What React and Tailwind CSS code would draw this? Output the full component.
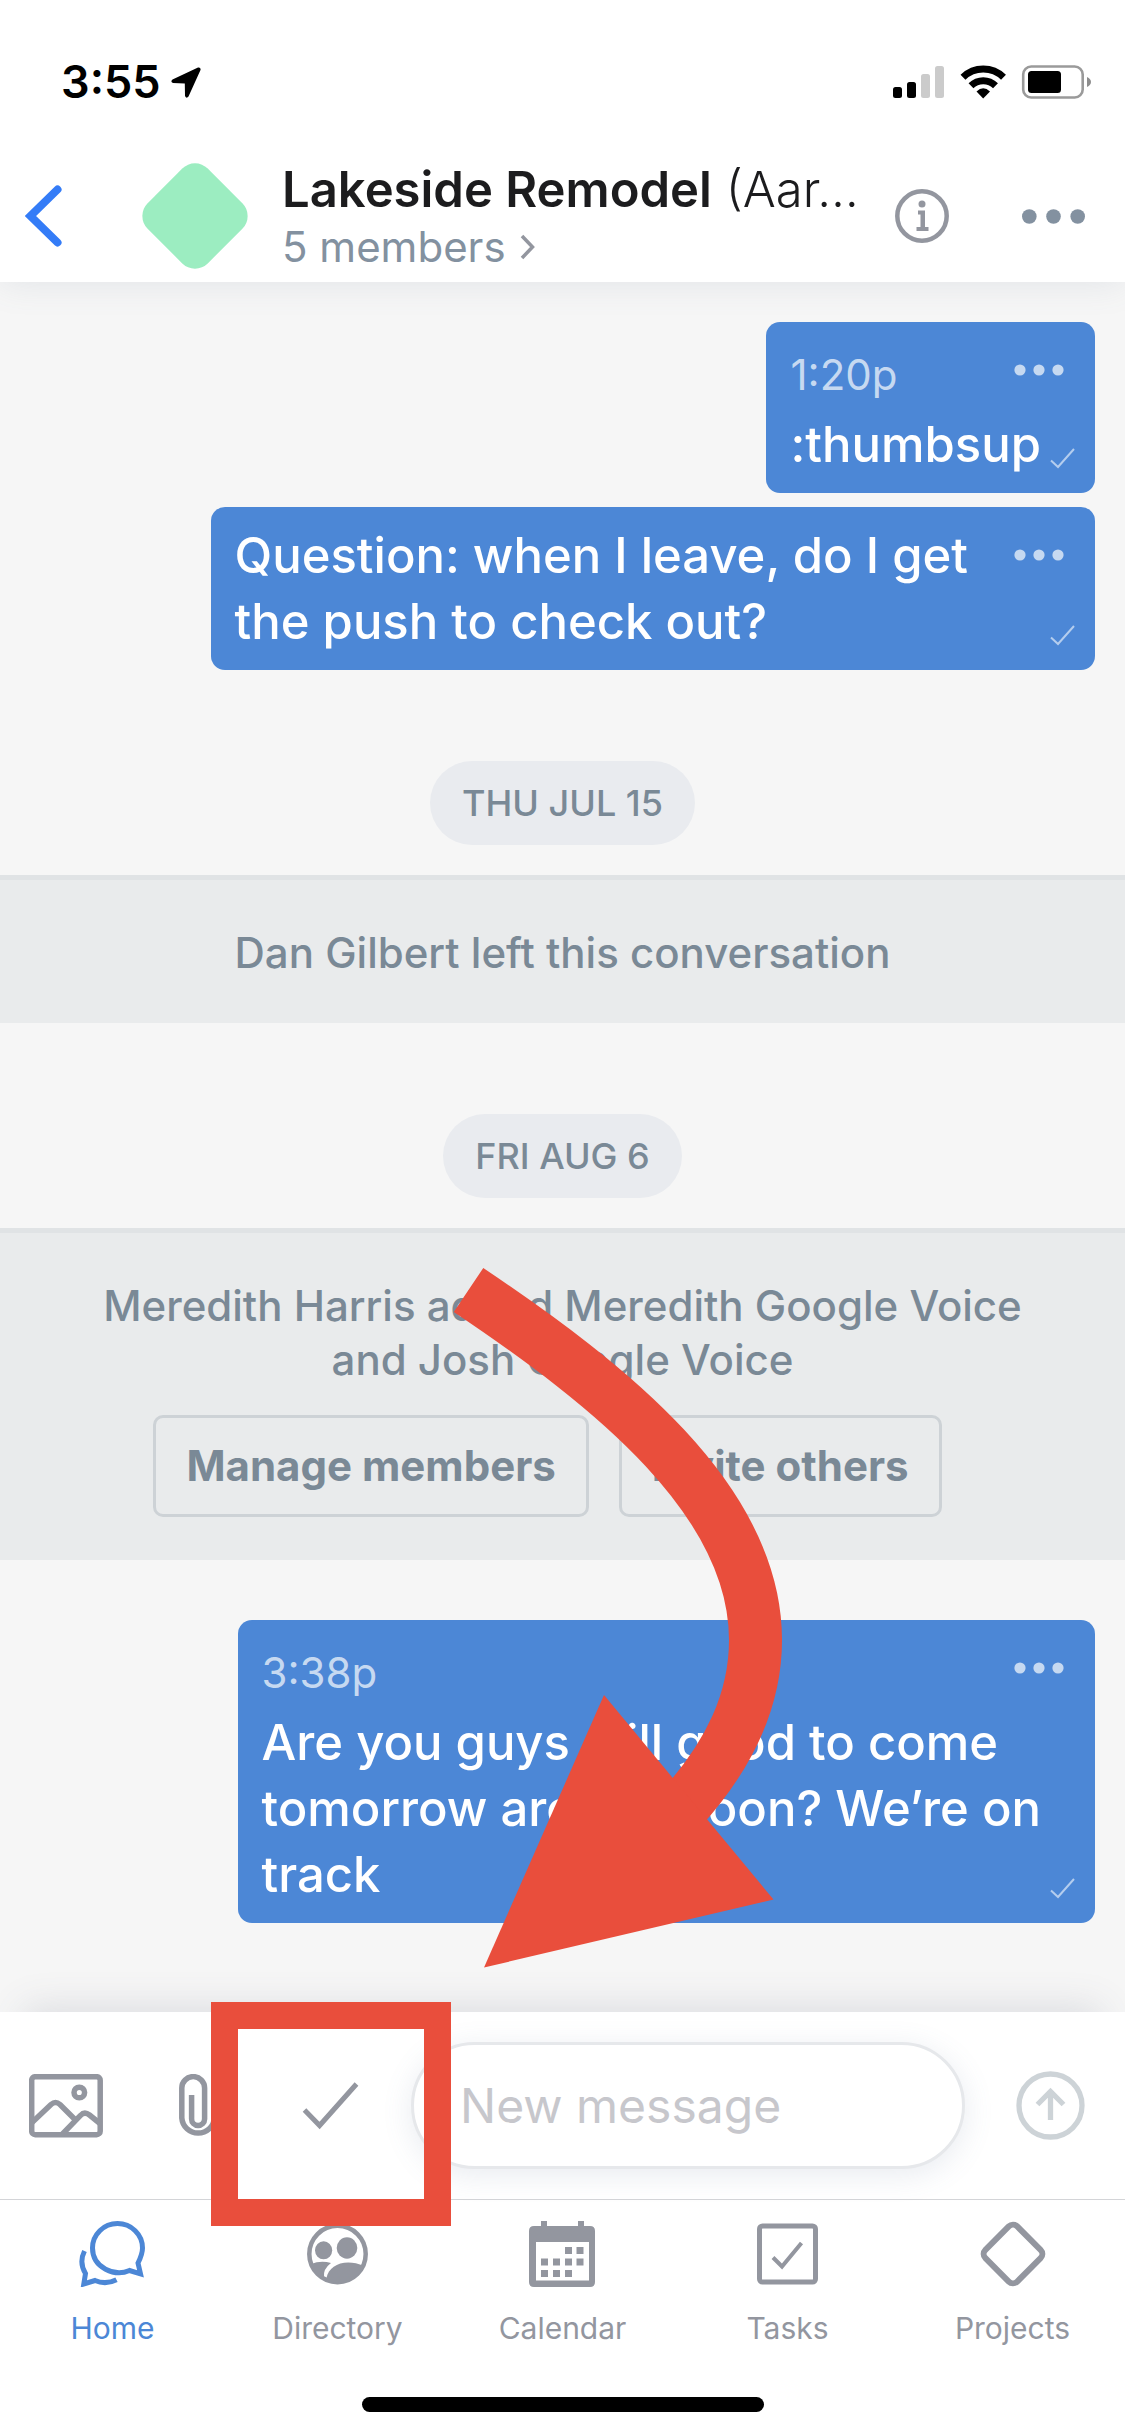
import React, { useState } from "react";

const tabs = [
  { name: "Home", icon: HomeIcon },
  { name: "Directory", icon: DirectoryIcon },
  { name: "Calendar", icon: CalendarIcon },
  { name: "Tasks", icon: TasksIcon },
  { name: "Projects", icon: ProjectsIcon },
];

function HomeIcon() {
  return (
    <svg width="67" height="66" viewBox="0 0 67 66" fill="none" stroke="currentColor" strokeWidth="5">
      <path d="M59 42 L61.5 52.8 L50.5 49.5 C36 56 13.5 47 13.5 27 A25 24.5 0 0 1 63.5 27 C63.5 33 61 38 59 42 Z" />
      <path d="M5.5 30 C1 39 2.5 46 6.5 52.5 L4.8 63 L16 59.5 C23 62.5 31 62 37.5 58.7" />
    </svg>
  );
}

function DirectoryIcon() {
  return (
    <svg width="62" height="66" viewBox="0 -3 62 66" fill="currentColor">
      <circle cx="30.5" cy="30" r="28.2" fill="none" stroke="currentColor" strokeWidth="4.5" />
      <ellipse cx="16.6" cy="26.3" rx="8.6" ry="9" />
      <ellipse cx="40" cy="24" rx="10.3" ry="10.7" />
      <path d="M4 40 Q14 36 24 39 Q16 45 17 53 L14 53 Q6 48 4 40 Z" />
      <path d="M19.5 54 C22 41 38 34 57 42 C52 56 36 63 19.5 56 Z" />
    </svg>
  );
}

function CalendarIcon() {
  return (
    <svg width="67" height="66" viewBox="0 0 67 66" fill="currentColor">
      <path d="M12 0h6v8h-6z M49 0h6v8h-6z" />
      <path fillRule="evenodd" d="M5 5H61Q66 5 66 10V61Q66 66 61 66H5Q0 66 0 61V10Q0 5 5 5Z M7 21V59.5H60V21Z" />
      <path d="M36 26h7v7h-7z M47.5 26h7v7h-7z M12 37.5h7v7h-7z M24 37.5h7v7h-7z M36 37.5h7v7h-7z M47.5 37.5h7v7h-7z M12 49h7v7h-7z M24 49h7v7h-7z M36 49h7v7h-7z" />
    </svg>
  );
}

function TasksIcon() {
  return (
    <svg width="61" height="66" viewBox="0 -2.5 61 66" fill="none" stroke="currentColor">
      <rect x="2.5" y="2.5" width="56" height="56" rx="3" strokeWidth="5" />
      <path d="M16 34 L25 43 L44.5 19.5" strokeWidth="4" />
    </svg>
  );
}

function ProjectsIcon() {
  return (
    <svg width="66" height="66" viewBox="-33 -33 66 66" fill="none" stroke="currentColor" strokeWidth="6">
      <rect x="-22.5" y="-22.5" width="45" height="45" rx="6" transform="rotate(45)" />
    </svg>
  );
}

function Dots() {
  return (
    <svg width="50" height="12" viewBox="0 0 50 12" fill="currentColor">
      <circle cx="6" cy="6" r="5.6" />
      <circle cx="25" cy="6" r="5.6" />
      <circle cx="44" cy="6" r="5.6" />
    </svg>
  );
}

function StatusBar() {
  return (
    <div className="flex items-center justify-between pt-[54px] pl-[61px] pr-[34px] h-[110px]">
      <div className="flex items-center gap-[10px] text-[45px] leading-[56px] font-semibold text-black">
        3:55
        <svg width="30" height="31" viewBox="0 0 30 31" fill="currentColor">
          <path d="M27 0.5 Q30 0 29.5 3 L17.5 29.5 Q15.5 32 14 29 L13.8 16.5 L2 16 Q-1 14.5 1.5 12.5 Z" />
        </svg>
      </div>
      <svg width="198" height="34" viewBox="893 65 198 34">
        <rect x="893" y="87" width="9" height="11" rx="2.5" />
        <rect x="907" y="82" width="9" height="16" rx="2.5" />
        <rect x="921" y="74" width="9" height="24" rx="2.5" fill="#cbcbcb" />
        <rect x="935" y="66" width="9" height="32" rx="2.5" fill="#cbcbcb" />
        <g fill="none" stroke="#000" strokeWidth="7">
          <path d="M963 77.3 A29 29 0 0 1 1003.5 77.3" />
          <path d="M971 85.8 A17.5 17.5 0 0 1 995.5 85.8" />
        </g>
        <path d="M976.5 91.5 Q983.2 85 990 91.5 L983.2 98.5 Z" />
        <rect x="1023.2" y="66.5" width="59.5" height="31" rx="8" fill="none" stroke="#9a9a9a" strokeWidth="2.6" />
        <rect x="1028" y="71" width="33" height="22" rx="3.5" />
        <path d="M1087 77 Q1091 79 1091 82 Q1091 85 1087 87 Z" fill="#8d8d8d" />
      </svg>
    </div>
  );
}

function Header() {
  return (
    <header className="relative z-10 bg-white shadow-[0_0_34px_rgba(90,110,140,0.14)]">
      <StatusBar />
      <div className="flex items-center h-[172px] pt-10 pl-[25px] pr-10">
        <button aria-label="Back" className="shrink-0">
          <svg width="37" height="62" viewBox="0 0 37 62" fill="none" stroke="#347cf7" strokeWidth="8" strokeLinecap="round">
            <path d="M32.5 4.5 L5.5 31 L32.5 57.5" />
          </svg>
        </button>
        <svg className="ml-20 shrink-0" width="106" height="106" viewBox="-53 -53 106 106">
          <rect x="-42.5" y="-42.5" width="85" height="85" rx="18" transform="rotate(45)" fill="#9cedc1" />
        </svg>
        <div className="ml-[34px] min-w-0 flex-1 pt-[6px]">
          <h1 className="whitespace-nowrap text-[49px] leading-[56px] font-light text-[#1c1c1e]">
            <span className="font-semibold">Lakeside Remodel</span> (Aar…
          </h1>
          <a href="#members" className="flex items-center gap-[14px] text-[42px] leading-[58px] text-[#8391a0]">
            5 members
            <svg width="15" height="26" viewBox="0 0 15 26" fill="none" stroke="#93969f" strokeWidth="3.5">
              <path d="M2 2 L12.5 13 L2 24" />
            </svg>
          </a>
        </div>
        <button aria-label="Info" className="shrink-0">
          <svg width="54" height="54" viewBox="0 0 54 54" fill="#93969f">
            <circle cx="27" cy="27" r="24.7" fill="none" stroke="#93969f" strokeWidth="4.5" />
            <circle cx="27" cy="15" r="3.5" />
            <path d="M23 21.5h7v16.5h3.5v4h-12v-4h4v-12.5h-2.5z" />
          </svg>
        </button>
        <button aria-label="More" className="ml-[73px] shrink-0">
          <svg width="63" height="15" viewBox="0 0 63 15" fill="#8391a0">
            <circle cx="7.3" cy="7.5" r="7.3" />
            <circle cx="31.5" cy="7.5" r="7.3" />
            <circle cx="55.7" cy="7.5" r="7.3" />
          </svg>
        </button>
      </div>
    </header>
  );
}

function Message({ time, text }) {
  return (
    <div className={`relative self-end mr-[30px] rounded-[14px] bg-[#4c87d6] pt-4 pb-[15px] pl-6 text-white ${time ? "pr-[54px]" : "pr-[127px]"}`}>
      {time && <div className="text-[42px] leading-[74px] text-[#c6d9f1]">{time}</div>}
      <p className="whitespace-pre-line text-[49px] leading-[66px] font-medium">{text}</p>
      <button aria-label="Message options" className="absolute top-[42px] right-[31px] text-[#c6d9f1]">
        <Dots />
      </button>
      <svg className="absolute right-5 bottom-6" width="25" height="21" viewBox="0 0 25 21" fill="none" stroke="#b4cdee" strokeWidth="2">
        <path d="M1 12.5 L8 19 L24 1" />
      </svg>
    </div>
  );
}

function DatePill({ children }) {
  return (
    <div className="mt-[91px] mb-[30px] self-center rounded-full bg-[#e9ebef] px-8 text-[36px] leading-[84px] font-medium text-[#7a8996]">
      {children}
    </div>
  );
}

function Notice({ children }) {
  return (
    <div className="border-t-5 border-[#e0e3e5] bg-[#e9ebec] pt-[46px] pb-[43px] text-center text-[42px] leading-[54px] font-medium text-[#7a8996]">
      {children}
    </div>
  );
}

function NoticeButton({ children }) {
  return (
    <button className="mr-[30px] h-[102px] rounded-[10px] border-3 border-[#cdd2d6] px-[30px] font-bold">
      {children}
    </button>
  );
}

function Composer() {
  const [message, setMessage] = useState("");

  return (
    <form className="relative z-20 flex items-center h-[188px] bg-white border-b border-[#d4d5d8] pl-[29px] pr-10 text-[#93969f] shadow-[0_-28px_36px_-24px_rgba(80,90,110,0.16)]">
      <button type="button" aria-label="Add photo" className="shrink-0">
        <svg width="74" height="64" viewBox="0 0 74 64" fill="none" stroke="currentColor" strokeWidth="5.5">
          <rect x="2.7" y="2.7" width="68.5" height="58" rx="3.5" />
          <circle cx="50.3" cy="18.5" r="5.3" />
          <path d="M3 48.5 L22 30.5 Q26.5 26.5 31 30.5 L46 45.5" />
          <path d="M32.5 61 L51.5 41.5 Q55.5 37 60.5 41 L71 49.5" />
        </svg>
      </button>
      <button type="button" aria-label="Attach file" className="ml-[76px] shrink-0">
        <svg width="40" height="64" viewBox="0 0 40 64" fill="none" stroke="currentColor" strokeWidth="5.5">
          <path d="M35.5 15 V44 A16.4 16.4 0 0 1 2.8 44 V14 A11.4 11.4 0 0 1 25.6 14 V45 A6.5 6.5 0 0 1 12.6 45 V21" />
        </svg>
      </button>
      <button type="button" aria-label="Add task" className="relative z-10 ml-[83px] shrink-0">
        <svg width="57" height="48" viewBox="0 0 57 48" fill="none" stroke="currentColor" strokeWidth="5">
          <path d="M2.5 28 L17.6 43.5 L54.5 2" />
        </svg>
        {/* callout frame round the check */}
        <span className="absolute -top-20 -left-[91px] w-60 h-56 border-27 border-[#e94e3c]" />
      </button>
      <input
        type="text"
        aria-label="New message"
        placeholder="New message"
        value={message}
        onChange={(e) => setMessage(e.target.value)}
        className="ml-[52px] min-w-0 flex-1 h-[127px] rounded-full border-3 border-[#e6e8eb] bg-white pl-[46px] pr-6 text-[48px] text-[#1c1c1e] placeholder:text-[#c7c7cc] shadow-[0_6px_30px_rgba(90,110,150,0.14)]"
      />
      <button type="submit" aria-label="Send" className="ml-[51px] shrink-0 text-[#cdd3d7]">
        <svg width="69" height="69" viewBox="0 0 69 69" fill="none" stroke="currentColor" strokeWidth="5.3">
          <circle cx="34.5" cy="34.5" r="31.5" />
          <path d="M34.5 49 V21 M21.5 33.5 L34.5 20.5 L47.5 33.5" />
        </svg>
      </button>
    </form>
  );
}

function TabBar() {
  return (
    <nav className="relative z-10 bg-white">
      <div className="grid grid-cols-5 pt-[21px]">
        {tabs.map((tab) => (
          <a
            key={tab.name}
            href={`#${tab.name.toLowerCase()}`}
            className={`flex flex-col items-center gap-[23px] text-[30px] leading-9 ${tab.name === "Home" ? "text-[#4c87d6]" : "text-[#93969f]"}`}
          >
            <tab.icon />
            {tab.name}
          </a>
        ))}
      </div>
      <div className="mx-auto mt-[51px] mb-6 h-[15px] w-[402px] rounded-full bg-black" />
    </nav>
  );
}

function Arrow() {
  return (
    <svg className="pointer-events-none absolute z-30 top-[1260px] left-[440px]" width="350" height="720" viewBox="440 1260 350 720">
      <path d="M468.5 1290 C610 1385 755.5 1500 755.5 1640 C755.5 1700 730 1755 680 1810" fill="none" stroke="#e94e3c" strokeWidth="53" />
      <path d="M604 1695 L773.5 1899.5 L484 1967.5 Z" fill="#e94e3c" />
    </svg>
  );
}

export default function App() {
  return (
    <div className="relative flex min-h-screen flex-col bg-[#f6f6f6] font-['Inter','Liberation_Sans',sans-serif]">
      <Header />
      <main className="flex flex-1 flex-col pt-10 pb-[89px]">
        <Message time="1:20p" text=":thumbsup" />
        <div className="h-[14px]" />
        <Message text={"Question: when I leave, do I get\nthe push to check out?"} />
        <DatePill>THU JUL 15</DatePill>
        <Notice>Dan Gilbert left this conversation</Notice>
        <DatePill>FRI AUG 6</DatePill>
        <Notice>
          <p className="mx-auto max-w-[940px]">Meredith Harris added Meredith Google Voice and Josh Google Voice</p>
          <div className="mt-7 flex justify-center">
            <NoticeButton>Manage members</NoticeButton>
            <NoticeButton>Invite others</NoticeButton>
          </div>
        </Notice>
        <div className="h-[60px]" />
        <Message time="3:38p" text={"Are you guys still good to come\ntomorrow around noon? We’re on\ntrack"} />
      </main>
      <Composer />
      <TabBar />
      <Arrow />
    </div>
  );
}
